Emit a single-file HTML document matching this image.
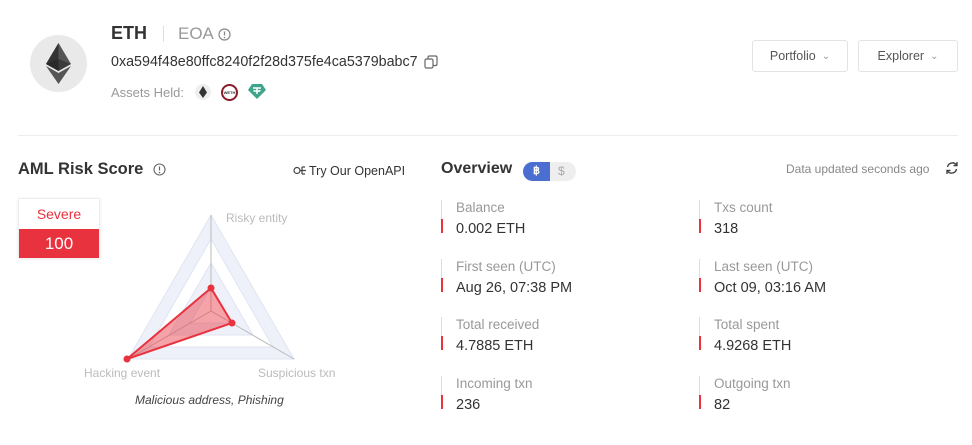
<!DOCTYPE html>
<html><head><meta charset="utf-8"><style>
*{margin:0;padding:0;box-sizing:border-box}
body{width:972px;height:445px;background:#fff;font-family:"Liberation Sans",sans-serif;position:relative;overflow:hidden;color:#333}
.a{position:absolute;white-space:nowrap}
.btn{position:absolute;border:1px solid #e3e3e3;border-radius:3px;height:32px;font-size:12.5px;color:#555;display:flex;align-items:center;justify-content:center;gap:6px}
.lbl{font-size:13.5px;color:#999}
.val{font-size:14.5px;color:#333}
.bar{position:absolute;width:1px;height:33px;background:#ddd}
.bar:after{content:"";position:absolute;left:0;bottom:0;width:2px;height:14px;background:#e8323e}
</style></head><body>
<div class="a" style="left:30px;top:35px;width:57px;height:57px;border-radius:50%;background:#e9e9e9"></div>
<svg class="a" style="left:30px;top:35px" width="57" height="57" viewBox="0 0 57 57">
<polygon points="28.5,8 41,29 28.5,36 16,29" fill="#555"/>
<polygon points="28.5,8 28.5,36 16,29" fill="#333"/>
<polygon points="28.5,38 41,31 28.5,49 16,31" fill="#555"/>
<polygon points="28.5,24 41,29 28.5,36 16,29" fill="#222" opacity=".5"/>
</svg>
<div class="a" style="left:111px;top:23px;font-size:18px;font-weight:bold;color:#333">ETH</div>
<div class="a" style="left:163px;top:26px;width:1px;height:16px;background:#ddd"></div>
<div class="a" style="left:178px;top:24px;font-size:17px;color:#999">EOA</div>
<svg class="a" style="left:218px;top:28px" width="13" height="13"><circle cx="6.5" cy="6.5" r="5.5" fill="none" stroke="#888" stroke-width="1.2"/><line x1="6.5" y1="3.5" x2="6.5" y2="7.5" stroke="#888" stroke-width="1.3"/><circle cx="6.5" cy="9.5" r=".8" fill="#888"/></svg>
<div class="a" style="left:111px;top:54px;font-size:14.3px;color:#333">0xa594f48e80ffc8240f2f28d375fe4ca5379babc7</div>
<svg class="a" style="left:424px;top:55px" width="14" height="14"><rect x="1" y="4" width="8" height="9" rx="1.5" fill="none" stroke="#666" stroke-width="1.2"/><path d="M4 4V2.5Q4 1 5.5 1H11.5Q13 1 13 2.5V9Q13 10.5 11.5 10.5H9" fill="none" stroke="#666" stroke-width="1.2"/></svg>
<div class="a" style="left:111px;top:85px;font-size:13px;color:#999">Assets Held:</div>
<div class="a" style="left:195px;top:84px;width:16px;height:16px;border-radius:50%;background:#eee"></div>
<svg class="a" style="left:195px;top:84px" width="16" height="16"><polygon points="8,2 12,8.5 8,14 4,8.5" fill="#333"/></svg>
<div class="a" style="left:221px;top:84px;width:17px;height:17px;border-radius:50%;border:2px solid #8a1e2a;background:#fff;font-size:4px;line-height:13px;text-align:center;font-weight:bold">WETH</div>
<svg class="a" style="left:248px;top:83px" width="18" height="17"><polygon points="4,1 14,1 18,7 9,16 0,7" fill="#3fa58a"/><path d="M5 5H13M9 5V11M5.5 7.5Q9 9 12.5 7.5" stroke="#fff" stroke-width="1.5" fill="none"/></svg>
<div class="btn" style="left:752px;top:40px;width:96px">Portfolio <span style="font-size:10px;color:#999">&#8964;</span></div>
<div class="btn" style="left:858px;top:40px;width:100px">Explorer <span style="font-size:10px;color:#999">&#8964;</span></div>
<div class="a" style="left:18px;top:135px;width:940px;height:1px;background:#eee"></div>

<div class="a" style="left:18px;top:160px;font-size:16.5px;font-weight:bold;color:#333">AML Risk Score</div>
<svg class="a" style="left:153px;top:163px" width="13" height="13"><circle cx="6.5" cy="6.5" r="5.5" fill="none" stroke="#666" stroke-width="1.1"/><line x1="6.5" y1="3.5" x2="6.5" y2="7.5" stroke="#666" stroke-width="1.2"/><circle cx="6.5" cy="9.5" r=".8" fill="#666"/></svg>
<svg class="a" style="left:293px;top:164px" width="14" height="13"><circle cx="4" cy="6.5" r="3" fill="none" stroke="#444" stroke-width="1.2"/><path d="M7 6.5H13M9 3H12M9 10H12M9 3V10" fill="none" stroke="#444" stroke-width="1.2"/></svg>
<div class="a" style="left:309px;top:164px;font-size:12.5px;color:#333">Try Our OpenAPI</div>
<div class="a" style="left:18px;top:198px;width:82px;height:60px;border:1px solid #eee;box-shadow:0 1px 3px rgba(0,0,0,.1)">
<div style="height:30px;text-align:center;line-height:30px;color:#e8323e;font-size:14px">Severe</div>
<div style="height:29px;background:#e8323e;color:#fff;text-align:center;line-height:29px;font-size:17px">100</div></div>
<svg class="a" style="left:0;top:0" width="420" height="445">
<polygon points="211,215 294,359 128,359" fill="#eef1f9" stroke="#e0e5f1"/>
<polygon points="211,239 273,347 149,347" fill="#fff" stroke="#e0e5f1"/>
<polygon points="211,263 253,335 169,335" fill="#eef1f9" stroke="#e0e5f1"/>
<polygon points="211,287 232,323 190,323" fill="#fff" stroke="#e0e5f1"/>
<line x1="211" y1="311" x2="211" y2="215" stroke="#bbb"/>
<line x1="211" y1="311" x2="294" y2="359" stroke="#bbb"/>
<line x1="211" y1="311" x2="128" y2="359" stroke="#bbb"/>
<polygon points="211,288 232,323 127,359" fill="rgba(232,50,62,.45)" stroke="#e8323e" stroke-width="2"/>
<circle cx="211" cy="288" r="3.5" fill="#e8323e"/><circle cx="232" cy="323" r="3.5" fill="#e8323e"/><circle cx="127" cy="359" r="3.5" fill="#e8323e"/>
</svg>
<div class="a" style="left:226px;top:211px;font-size:12px;color:#bbb">Risky entity</div>
<div class="a" style="left:84px;top:366px;font-size:12px;color:#bbb">Hacking event</div>
<div class="a" style="left:258px;top:366px;font-size:12px;color:#bbb">Suspicious txn</div>
<div class="a" style="left:135px;top:393px;font-size:12px;color:#444;font-style:italic">Malicious address, Phishing</div>

<div class="a" style="left:441px;top:160px;font-size:16px;font-weight:bold;color:#333">Overview</div>
<div class="a" style="left:523px;top:162px;width:53px;height:19px;border-radius:10px;background:#eee"></div>
<div class="a" style="left:523px;top:162px;width:27px;height:19px;border-radius:10px 0 0 10px;background:#4b6fd0;color:#fff;font-size:11px;font-weight:bold;text-align:center;line-height:19px">&#3647;</div>
<div class="a" style="left:558px;top:164px;font-size:12px;color:#aaa">$</div>
<div class="a" style="left:786px;top:162px;font-size:12px;color:#888">Data updated seconds ago</div>
<svg class="a" style="left:945px;top:161px" width="14" height="14"><path d="M2.5 6A5 5 0 0 1 11.5 4M11.5 8A5 5 0 0 1 2.5 10" fill="none" stroke="#444" stroke-width="1.4"/><path d="M12 1V4.5H8.5M2 13V9.5H5.5" fill="none" stroke="#444" stroke-width="1.4"/></svg>

<div class="bar" style="left:441px;top:200px"></div><div class="a lbl" style="left:456px;top:200px">Balance</div><div class="a val" style="left:456px;top:221px">0.002 ETH</div>
<div class="bar" style="left:699px;top:200px"></div><div class="a lbl" style="left:714px;top:200px">Txs count</div><div class="a val" style="left:714px;top:221px">318</div>
<div class="bar" style="left:441px;top:259px"></div><div class="a lbl" style="left:456px;top:259px">First seen (UTC)</div><div class="a val" style="left:456px;top:280px">Aug 26, 07:38 PM</div>
<div class="bar" style="left:699px;top:259px"></div><div class="a lbl" style="left:714px;top:259px">Last seen (UTC)</div><div class="a val" style="left:714px;top:280px">Oct 09, 03:16 AM</div>
<div class="bar" style="left:441px;top:317px"></div><div class="a lbl" style="left:456px;top:317px">Total received</div><div class="a val" style="left:456px;top:338px">4.7885 ETH</div>
<div class="bar" style="left:699px;top:317px"></div><div class="a lbl" style="left:714px;top:317px">Total spent</div><div class="a val" style="left:714px;top:338px">4.9268 ETH</div>
<div class="bar" style="left:441px;top:376px"></div><div class="a lbl" style="left:456px;top:376px">Incoming txn</div><div class="a val" style="left:456px;top:397px">236</div>
<div class="bar" style="left:699px;top:376px"></div><div class="a lbl" style="left:714px;top:376px">Outgoing txn</div><div class="a val" style="left:714px;top:397px">82</div>
</body></html>
